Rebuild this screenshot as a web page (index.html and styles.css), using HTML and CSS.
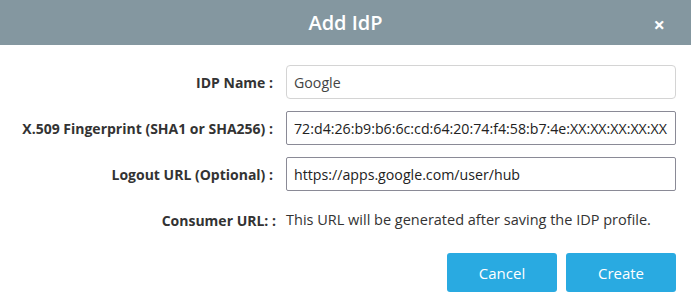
FILE: index.html
```html
<!DOCTYPE html>
<html lang="en">
<head>
    <meta charset="UTF-8">
    <title>Add IdP</title>
    <link rel="stylesheet" href="styles.css">
</head>
<body>
    <div class="modal">
        <div class="modal-header">
            <h1 class="modal-title">Add IdP</h1>
            <span class="close-btn">&times;</span>
        </div>

        <div class="modal-body">
            <div class="form-grid">
                <label class="form-label">IDP Name :</label>
                <input class="form-input" type="text" value="Google">

                <label class="form-label">X.509 Fingerprint (SHA1 or SHA256) :</label>
                <input class="form-input dark" type="text" value="72:d4:26:b9:b6:6c:cd:64:20:74:f4:58:b7:4e:XX:XX:XX:XX:XX">

                <label class="form-label">Logout URL (Optional) :</label>
                <input class="form-input dark" type="text" value="https://apps.google.com/user/hub">

                <label class="form-label consumer">Consumer URL: :</label>
                <div class="form-text">This URL will be generated after saving the IDP profile.</div>
            </div>

            <div class="actions">
                <button class="btn">Cancel</button>
                <button class="btn">Create</button>
            </div>
        </div>
    </div>
</body>
</html>
```

FILE: styles.css
```css
* {
    box-sizing: border-box;
    margin: 0;
    padding: 0;
}

body {
    font-family: 'Open Sans', sans-serif;
    background: #fff;
    color: #333;
    width: 691px;
}

.modal-header {
    position: relative;
    height: 45px;
    background: #8497a0;
    display: flex;
    align-items: center;
    justify-content: center;
}

.modal-title {
    color: #fff;
    font-size: 20px;
    font-weight: 600;
}

.close-btn {
    position: absolute;
    right: 26px;
    top: 11px;
    color: #fff;
    font-size: 20px;
    font-weight: 700;
}

.modal-body {
    padding: 20px 15px 0 0;
}

.form-grid {
    display: grid;
    grid-template-columns: 276px 390px;
    column-gap: 10px;
    row-gap: 12px;
    align-items: center;
}

.form-label {
    text-align: right;
    font-size: 14px;
    font-weight: 700;
    color: #333;
    padding-right: 3px;
}

.form-label.consumer {
    padding-right: 0;
    margin-top: 7px;
}

.form-input {
    height: 34px;
    border: 1px solid #d4d4d4;
    border-radius: 4px;
    padding: 0 3px 0 7px;
    font-family: 'Open Sans', sans-serif;
    font-size: 14.2px;
    color: #444;
    outline: none;
}

.form-input.dark {
    border-color: #8a8a96;
    border-radius: 2px;
    color: #222;
}

.form-text {
    font-size: 14.5px;
    color: #333;
    line-height: 20px;
    margin-top: 7px;
}

.actions {
    display: flex;
    justify-content: flex-end;
    gap: 9px;
    margin-top: 23px;
}

.btn {
    width: 110px;
    height: 39px;
    background: #29aae1;
    color: #fff;
    border: none;
    border-radius: 3px;
    font-family: 'Open Sans', sans-serif;
    font-size: 15px;
}
```
